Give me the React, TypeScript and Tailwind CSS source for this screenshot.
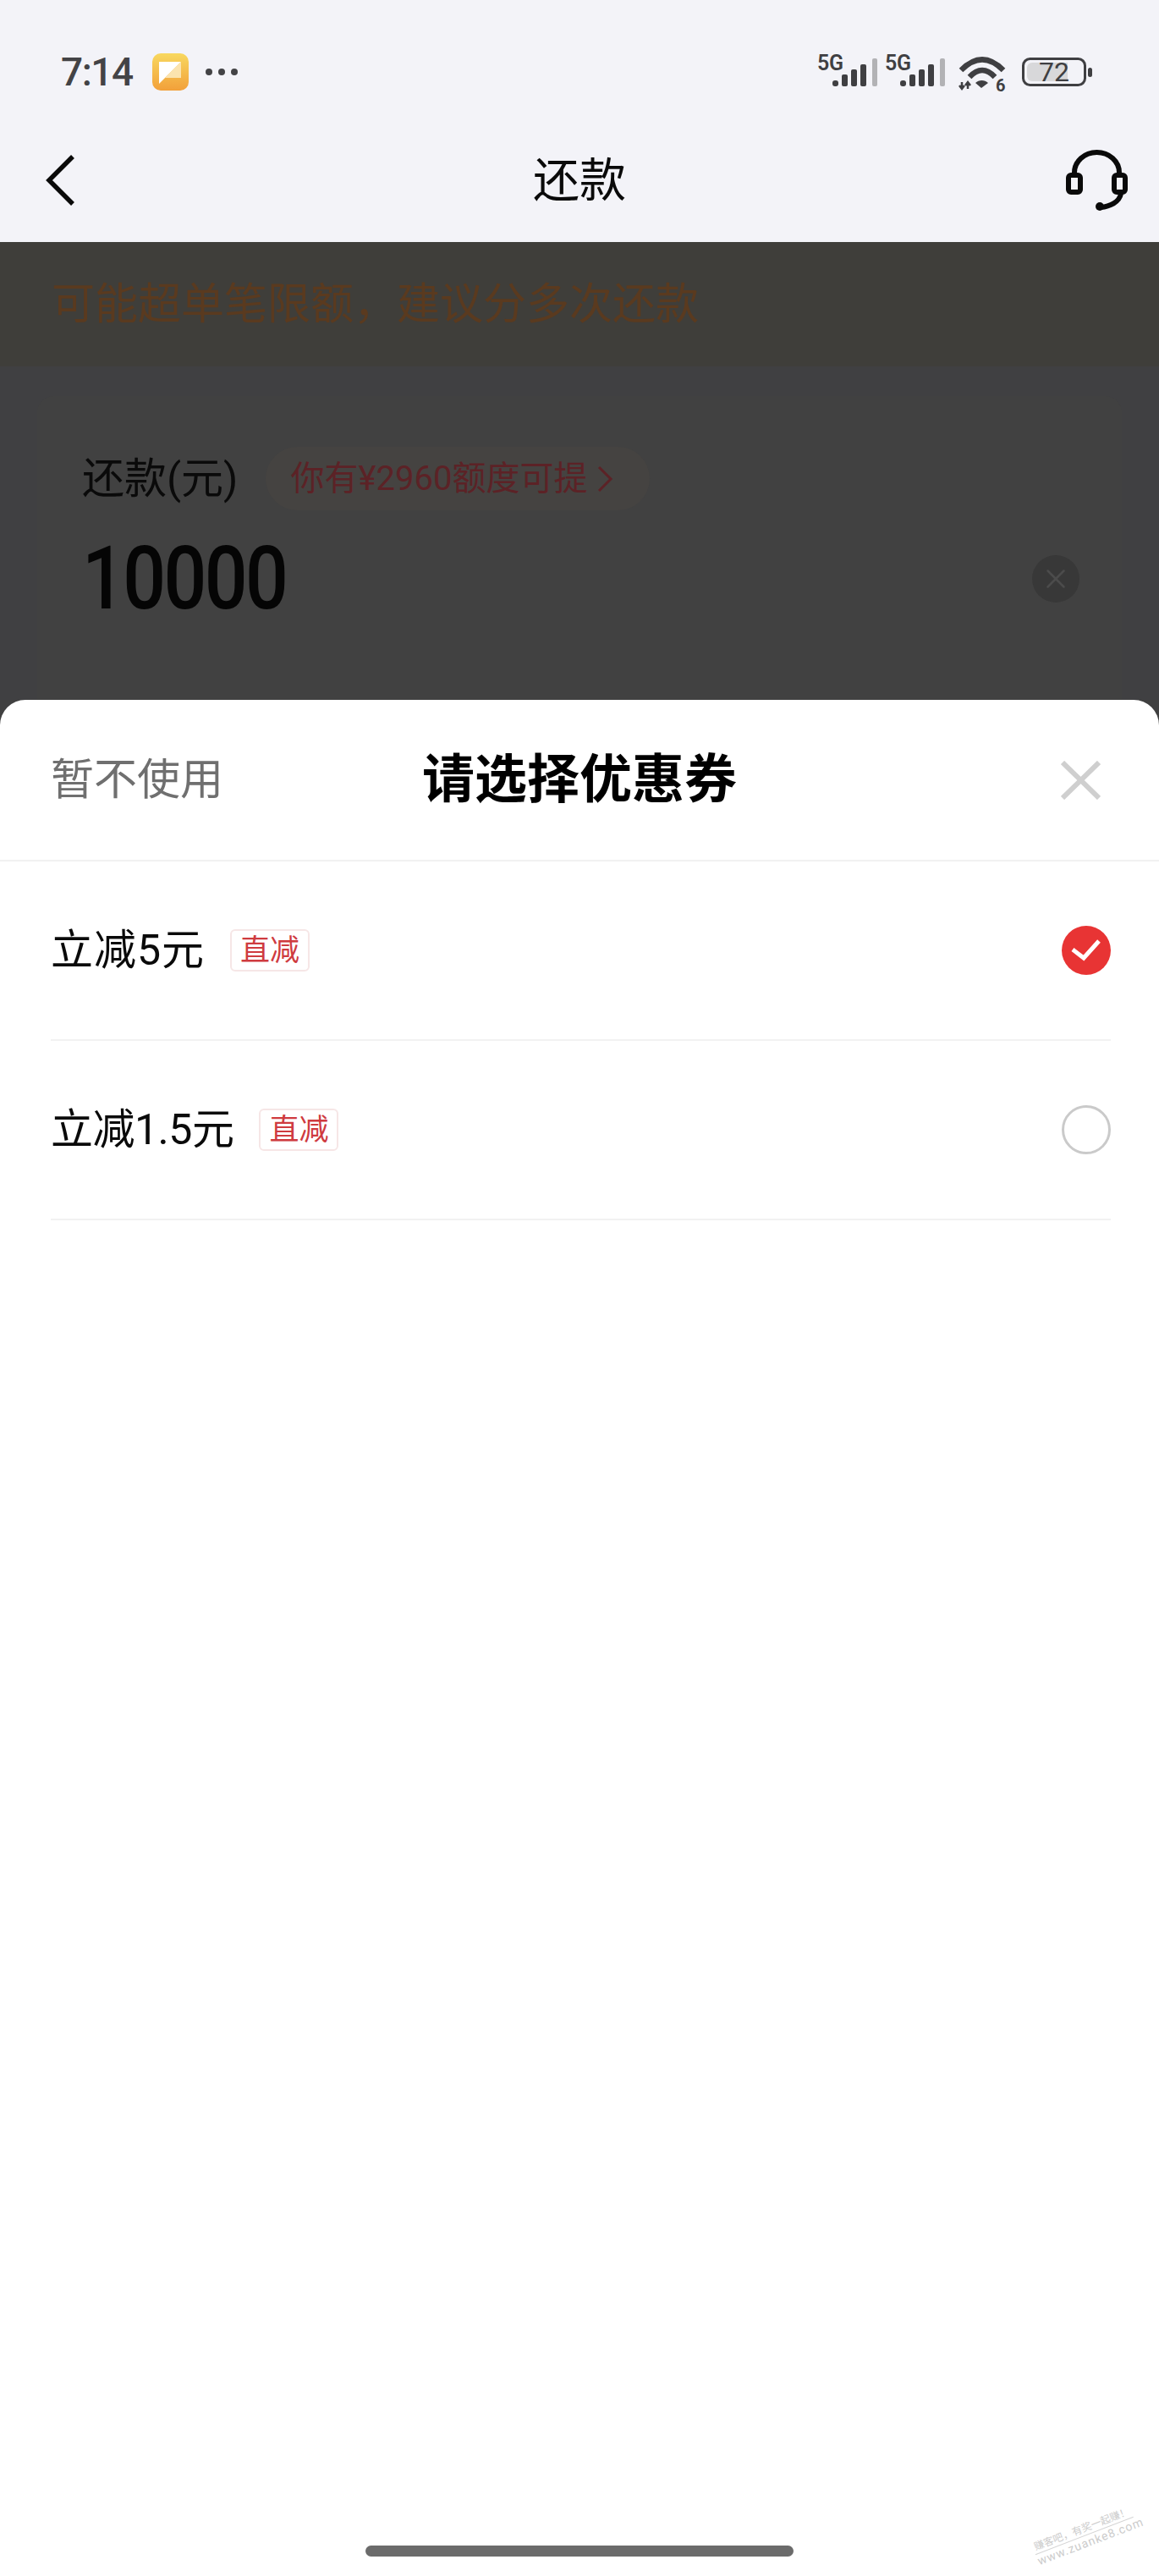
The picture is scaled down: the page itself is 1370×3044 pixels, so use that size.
import { X } from "lucide-react"

interface ICoupon {
    label: string,
    spacing: string,
    selected: boolean
}

const couponList: ICoupon[] = [
    { label: '立减5元', spacing: 'tracking-[1px]', selected: true },
    { label: '立减1.5元', spacing: 'tracking-[-0.5px]', selected: false },
]

function AppBadge() {
    return (
        <svg width="43" height="44" viewBox="0 0 43 44">
            <defs>
                <linearGradient id="badge" x1="0" y1="0" x2="0" y2="1">
                    <stop offset="0" stopColor="#f8d85f" />
                    <stop offset="1" stopColor="#f2a03a" />
                </linearGradient>
            </defs>
            <rect width="43" height="44" rx="10" fill="url(#badge)" />
            <path d="M34 10H8V36Z" fill="#ffffff" />
            <path d="M34 10V29H15Z" fill="#fbe3ae" />
        </svg>
    )
}

function Signal() {
    return (
        <svg className="overflow-visible" width="71" height="37" viewBox="0 0 71 37">
            <text x="0" y="18" fontSize="25" fontWeight="600" fontFamily="Roboto, sans-serif" fill="#3f3f42" textLength="31">5G</text>
            <rect x="18" y="30" width="7" height="7" rx="3" fill="#3f3f42" />
            <rect x="29" y="23" width="7" height="14" rx="2" fill="#3f3f42" />
            <rect x="40" y="17" width="7" height="20" rx="2" fill="#3f3f42" />
            <rect x="51" y="11" width="7" height="26" rx="2" fill="#3f3f42" />
            <rect x="65" y="4" width="6" height="33" rx="2" fill="#b2b2b5" />
        </svg>
    )
}

function Wifi() {
    return (
        <svg className="overflow-visible" width="56" height="42" viewBox="0 0 56 42">
            <path d="M3 17Q28 -8 53 17" fill="none" stroke="#3f3f42" strokeWidth="6.5" />
            <path d="M13 25Q28 9 43 25" fill="none" stroke="#3f3f42" strokeWidth="6.5" />
            <path d="M27 38L20 32C24 28 31 28 35 32Z" fill="#3f3f42" />
            <path d="M4 31V39M1 35L4 39L7 35" fill="none" stroke="#3f3f42" strokeWidth="2.5" />
            <path d="M11 39V31M8 35L11 31L14 35" fill="none" stroke="#3f3f42" strokeWidth="2.5" />
            <text x="44" y="42" fontSize="20" fontWeight="700" fontFamily="Roboto, sans-serif" fill="#3f3f42">6</text>
        </svg>
    )
}

function Battery() {
    return (
        <svg className="overflow-visible" width="83" height="34" viewBox="0 0 83 34">
            <rect x="1.5" y="1.5" width="73" height="31" rx="8" fill="none" stroke="#3f3f42" strokeWidth="3" />
            <path d="M12 6H54V28H12A6 6 0 0 1 6 22V12A6 6 0 0 1 12 6Z" fill="#d8d8da" />
            <text x="38" y="28" textAnchor="middle" fontSize="32" fontFamily="Roboto, sans-serif" fill="#3f3f42">72</text>
            <rect x="78" y="12" width="5" height="11" rx="2.5" fill="#3f3f42" />
        </svg>
    )
}

function Headset() {
    return (
        <svg width="73" height="72" viewBox="0 0 73 72" fill="none" stroke="#0a0a0a" strokeWidth="6">
            <path d="M10 28V27A26.5 24 0 0 1 63 27V28" />
            <rect x="3" y="30" width="14" height="20" rx="3" />
            <rect x="57" y="30" width="13" height="20" rx="3" />
            <path d="M65 52C63 62 52 67 41 68" />
            <circle cx="40" cy="67" r="5" fill="#0a0a0a" stroke="none" />
        </svg>
    )
}

export default function App() {
    return (
        <div className="h-[3044px] w-full flex flex-col overflow-hidden bg-[#404040] font-['Roboto','Noto_Sans_CJK_SC',sans-serif]">
            {/* Status bar and title */}
            <div className="h-[286px] shrink-0 pt-[55px] bg-[#f3f3f8]">
                <div className="h-[60px] flex items-center">
                    <span className="ml-[72px] w-[86px] text-[46px] leading-none font-medium tracking-[-1.5px] text-[#434346]">7:14</span>
                    <span className="ml-[22px] flex"><AppBadge /></span>
                    <span className="ml-[20px] flex gap-[7px]">
                        <i className="size-[8px] rounded-full bg-[#434346]" />
                        <i className="size-[8px] rounded-full bg-[#434346]" />
                        <i className="size-[8px] rounded-full bg-[#434346]" />
                    </span>
                    <div className="ml-auto mr-[79px] mt-[3px] flex items-start gap-[9px]">
                        <Signal />
                        <Signal />
                        <span className="ml-[7px] mt-[1px] flex"><Wifi /></span>
                        <span className="ml-[10px] mt-[3px] flex"><Battery /></span>
                    </div>
                </div>
                <div className="mt-[56px] h-[84px] grid grid-cols-[1fr_auto_1fr] items-center">
                    <svg className="ml-[54px]" width="34" height="60" viewBox="0 0 34 60" fill="none" stroke="#0a0a0a" strokeWidth="5.5">
                        <path d="M32 2L4 30L32 58" />
                    </svg>
                    <h1 className="text-[55px] leading-none text-[#0a0a0a]">还款</h1>
                    <span className="justify-self-end mr-[37px] flex"><Headset /></span>
                </div>
            </div>

            {/* Dimmed page behind the sheet */}
            <div className="h-[541px] shrink-0 flex flex-col overflow-hidden bg-[#404042]">
                <div className="h-[147px] shrink-0 flex items-center pl-[61px] bg-[#3f3e3a]">
                    <p className="text-[51px] leading-none text-[#5a3a1f]">可能超单笔限额，建议分多次还款</p>
                </div>
                <div className="mt-[35px] mx-[44px] flex-1 rounded-t-[20px] bg-[#414141] pt-[60px]">
                    <div className="flex items-center">
                        <span className="ml-[53px] text-[50px] leading-none text-[#0a0a0a]">还款(元)</span>
                        <span className="ml-[32px] h-[75px] w-[454px] flex items-center pl-[30px] rounded-full bg-[#454341]">
                            <span className="text-[40px] leading-none text-[#5c2226]">你有¥2960额度可提</span>
                            <svg className="ml-[11px]" width="20" height="32" viewBox="0 0 20 32" fill="none" stroke="#5c2226" strokeWidth="3">
                                <path d="M3 2L17 16L3 30" />
                            </svg>
                        </span>
                    </div>
                    <div className="mt-[41px] h-[80px] flex items-center justify-between">
                        <span className="ml-[53px] inline-block origin-left scale-x-[0.86] text-[104px] leading-[80px] font-medium tracking-[-3px] text-[#050505]">10000</span>
                        <span className="mr-[50px] size-[56px] flex items-center justify-center rounded-full bg-[#383838]">
                            <X size={38} strokeWidth={1.6} color="#4c4c4c" />
                        </span>
                    </div>
                </div>
            </div>

            {/* Coupon sheet */}
            <div className="relative flex-1 flex flex-col rounded-t-[30px] bg-white">
                <div className="h-[191px] shrink-0 grid grid-cols-[1fr_auto_1fr] items-center border-b-2 border-[#f1f1f1]">
                    <span className="pl-[60px] text-[51px] leading-none text-[#6f6f6f]">暂不使用</span>
                    <h2 className="text-[62px] leading-none font-bold text-black">请选择优惠券</h2>
                    <svg className="justify-self-end mr-[69px]" width="47" height="46" viewBox="0 0 47 46" stroke="#cfcfcf" strokeWidth="6">
                        <path d="M2 2L45 44M45 2L2 44" />
                    </svg>
                </div>
                {couponList.map((coupon, index) => (
                    <div key={index} className="ml-[60px] mr-[57px] h-[212px] shrink-0 flex items-center border-b-2 border-[#f2f2f2]">
                        <span className={`text-[50px] leading-none text-[#0a0a0a] ${coupon.spacing}`}>{coupon.label}</span>
                        <span className="ml-[30px] w-[94px] h-[50px] flex items-center justify-center rounded-[6px] border-2 border-[#f6e6e6] text-[35px] leading-none text-[#cf3b3f]">直减</span>
                        {coupon.selected ? (
                            <svg className="ml-auto" width="58" height="58" viewBox="0 0 58 58">
                                <circle cx="29" cy="29" r="29" fill="#e83434" />
                                <path d="M13 28L26 38L44 18" fill="none" stroke="#ffffff" strokeWidth="5" />
                            </svg>
                        ) : (
                            <span className="ml-auto size-[58px] rounded-full border-[3px] border-[#cacaca]" />
                        )}
                    </div>
                ))}
                <div className="mt-auto mb-[23px] self-center w-[506px] h-[13px] rounded-full bg-[#6b6b6b]" />

                {/* Watermark */}
                <div className="absolute right-[26px] bottom-[31px] w-[124px] -rotate-[21deg] text-center text-[#cccccc]">
                    <div className="text-[12px] leading-[15px] border-b border-[#d4d4d4] whitespace-nowrap">赚客吧，有奖一起赚！</div>
                    <div className="text-[14px] leading-[16px] tracking-[1px] whitespace-nowrap">www.zuanke8.com</div>
                </div>
            </div>
        </div>
    )
}
